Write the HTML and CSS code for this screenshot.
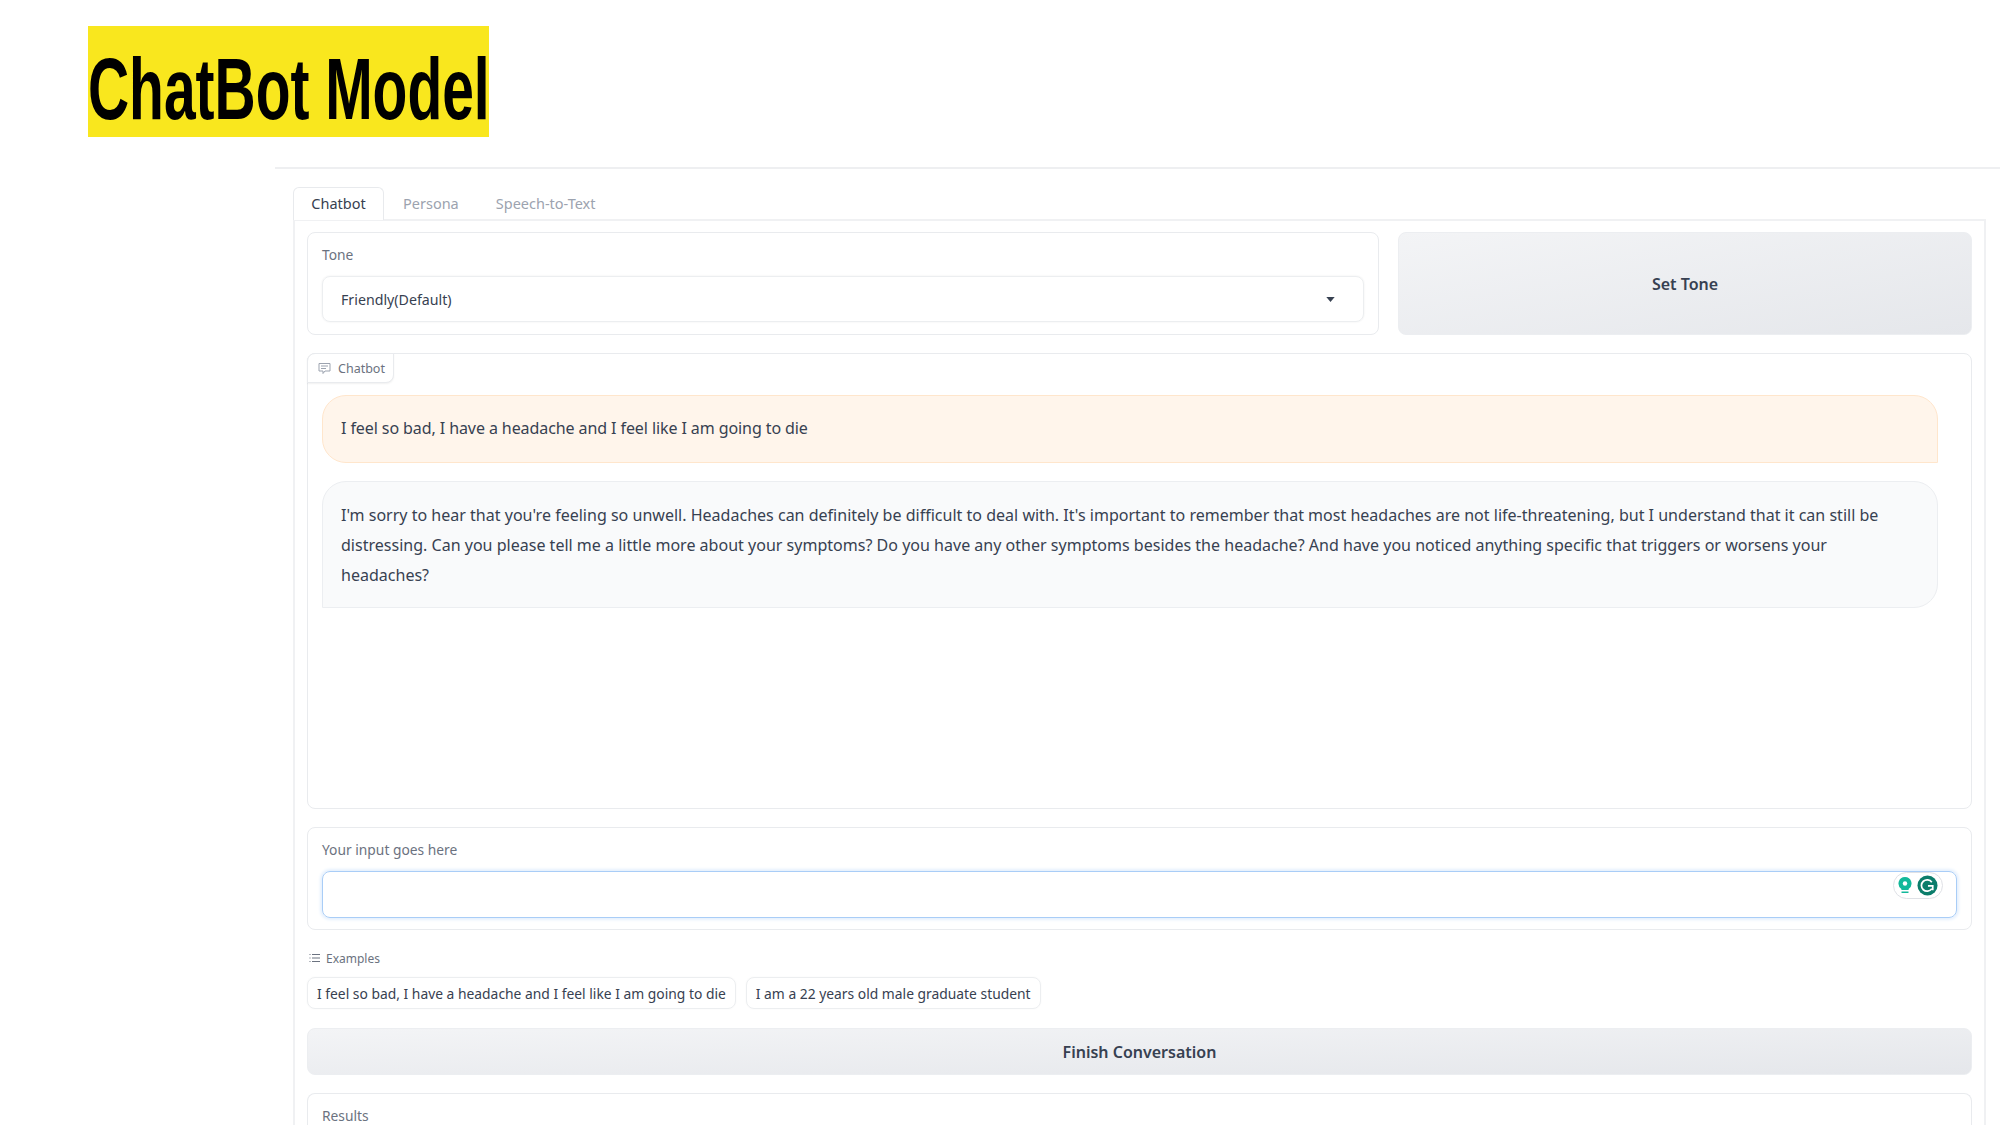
FILE: index.html
```html
<!DOCTYPE html>
<html lang="en">
<head>
<meta charset="utf-8">
<title>ChatBot Model</title>
<link rel="stylesheet" href="styles.css">
</head>
<body>
<header class="slide-head"><h1 class="slide-title"><span class="slide-title-text">ChatBot Model</span></h1></header>
<main class="app">
  <nav class="tabs">
    <button class="tab tab-active">Chatbot</button>
    <button class="tab">Persona</button>
    <button class="tab">Speech-to-Text</button>
  </nav>
  <section class="panel">
    <div class="tone-row">
      <div class="block tone-block">
        <div class="label">Tone</div>
        <div class="field select"><span>Friendly(Default)</span><svg class="caret" width="9" height="5" viewBox="0 0 10 6"><path d="M0 0h10L5 6z"/></svg></div>
      </div>
      <button class="btn set-tone">Set Tone</button>
    </div>
    <div class="block chat-block">
      <div class="chat-tag"><svg width="13" height="13" viewBox="0 0 13 13" fill="none" stroke="#9ca3af" stroke-width="1"><path d="M1 1.5h11v7.5H7l-2 2.5V9H1z"/><path d="M3 4h7M3 6.5h5"/></svg><span>Chatbot</span></div>
      <div class="bubble user">I feel so bad, I have a headache and I feel like I am going to die</div>
      <div class="bubble bot">I'm sorry to hear that you're feeling so unwell. Headaches can definitely be difficult to deal with. It's important to remember that most headaches are not life-threatening, but I understand that it can still be<br>distressing. Can you please tell me a little more about your symptoms? Do you have any other symptoms besides the headache? And have you noticed anything specific that triggers or worsens your<br>headaches?</div>
    </div>
    <div class="block input-block">
      <div class="label">Your input goes here</div>
      <div class="field text-input">
        <div class="grammarly">
          <svg width="14" height="18" viewBox="0 0 14 18"><path fill="#12b89a" d="M7 0a6.5 6.5 0 0 1 3.6 11.9V13H3.400V11.900A6.500 6.500 0 0 1 7 0z"/><path fill="#12b89a" d="M3.500 14.500h7V16h-7z"/><circle cx="7" cy="6.500" r="2.200" fill="#fff"/></svg>
          <svg width="21" height="21" viewBox="0 0 22 22"><circle cx="11" cy="11" r="10.500" fill="#0b7d6b"/><path d="M15.500 7.500A6 6 0 1 0 15.500 14.500M11.500 11.500H16.500V16" fill="none" stroke="#fff" stroke-width="1.800"/></svg>
        </div>
      </div>
    </div>
    <div class="examples">
      <div class="examples-head"><svg width="12" height="12" viewBox="0 0 12 12" stroke="#6b7280" stroke-width="1"><path d="M3 2.500h8M3 6h8M3 9.500h8M.5 2.500h1M.5 6h1M.5 9.500h1"/></svg><span>Examples</span></div>
      <div class="example-list">
        <button class="example">I feel so bad, I have a headache and I feel like I am going to die</button>
        <button class="example">I am a 22 years old male graduate student</button>
      </div>
    </div>
    <button class="btn finish">Finish Conversation</button>
    <div class="block results-block"><div class="label">Results</div></div>
  </section>
</main>
</body>
</html>
```
FILE: styles.css
```css
* { box-sizing: border-box; }
html, body { margin: 0; height: 1125px; overflow: hidden; background: #fff; }
body { font-family: "Noto Sans", sans-serif; color: #374151; }
button { font: inherit; color: inherit; background: none; border: 0; padding: 0; }

.slide-head { padding: 26px 0 0 88px; height: 167px; }
.slide-title { margin: 0; width: 401px; height: 111px; background: #f9e71e; }
.slide-title-text { display: inline-block; font: 700 88px/101px "Liberation Sans", sans-serif; color: #000; white-space: nowrap; padding-top: 12px; transform: scaleX(.647); transform-origin: left top; }

.app { margin-left: 275px; border-top: 2px solid #eeeff1; padding: 17px 14px 0 18px; }
.tabs { display: flex; height: 33px; }
.tab { padding: 0 19px; font-size: 14.500px; color: #9ca3af; }
.tab + .tab + .tab { padding-left: 18px; }
.tab-active { color: #374151; width: 91px; padding: 0 0 2px; background: #fff; border: 1px solid #e8eaed; border-bottom: 0; border-radius: 6px 6px 0 0; position: relative; top: 1px; }
.panel { border: 2px solid #f0f1f3; border-bottom: 0; padding: 11px 12px 0; display: flex; flex-direction: column; height: 906px; }
.panel > * { flex: none; }

.block { border: 1px solid #e9ebee; border-radius: 8px; background: #fff; }
.label { font-size: 13.800px; color: #6b7280; line-height: 20px; }
.field { border: 1px solid #eceef0; border-radius: 8px; box-shadow: 0 0 2px rgba(0,0,0,.08); }

.tone-row { display: flex; gap: 19px; height: 103px; margin-bottom: 18px; }
.tone-block { flex: 1; padding: 12px 14px; }
.select { margin-top: 11px; height: 46px; display: flex; align-items: center; justify-content: space-between; padding: 0 28px 0 18px; font-size: 14.200px; color: #374151; }
.caret { fill: #374151; }
.btn { border-radius: 8px; border: 1px solid #eceef1; background: linear-gradient(to bottom right, #f3f4f6, #e5e7eb); font-weight: 600; font-size: 16px; color: #374151; }
.set-tone { width: 574px; }

.chat-block { height: 456px; padding: 0 33px 0 14px; position: relative; margin-bottom: 18px; }
.chat-tag { position: absolute; left: -1px; top: -1px; width: 87px; height: 30px; display: flex; align-items: center; gap: 7px; padding-left: 10px; font-size: 12.500px; color: #6b7280; border: 1px solid #e9ebee; border-radius: 8px 0 8px 0; box-shadow: 0 1px 2px rgba(0,0,0,.06); background: #fff; }
.bubble { font-size: 16.050px; line-height: 30px; padding: 17px 18px; border: 1px solid; white-space: nowrap; }
.user { margin-top: 41px; height: 68px; letter-spacing: -.1px; background: #fff5eb; border-color: #ffe6cc; border-radius: 24px 24px 0 24px; }
.bot { margin-top: 18px; height: 127px; padding-top: 18px; background: #f9fafb; border-color: #eceef1; border-radius: 24px 24px 24px 0; }

.input-block { height: 103px; padding: 12px 14px; }
.text-input { margin-top: 11px; height: 47px; width: 1635px; border: 1px solid #a9cdf7; box-shadow: 0 0 3px 2px #e5f0fd; position: relative; }
.grammarly { position: absolute; right: 13px; top: 0; width: 50px; height: 27px; border: 1px solid #dfe1e6; border-radius: 14px; display: flex; align-items: center; justify-content: center; gap: 5px; background: #fff; }

.examples { margin-top: 20px; }
.examples-head { display: flex; align-items: center; gap: 5px; height: 16px; font-size: 12px; color: #6b7280; margin-left: 2px; }
.example-list { display: flex; gap: 10px; margin-top: 11px; }
.example { height: 32px; padding: 0 9px; border: 1px solid #eceef0; border-radius: 8px; font-size: 13.850px; white-space: nowrap; box-shadow: 0 0 2px rgba(0,0,0,.04); }
.finish { height: 47px; margin-top: 19px; }
.results-block { margin-top: 18px; flex: 1; padding: 12px 14px; border-bottom: 0; border-radius: 8px 8px 0 0; }
```
